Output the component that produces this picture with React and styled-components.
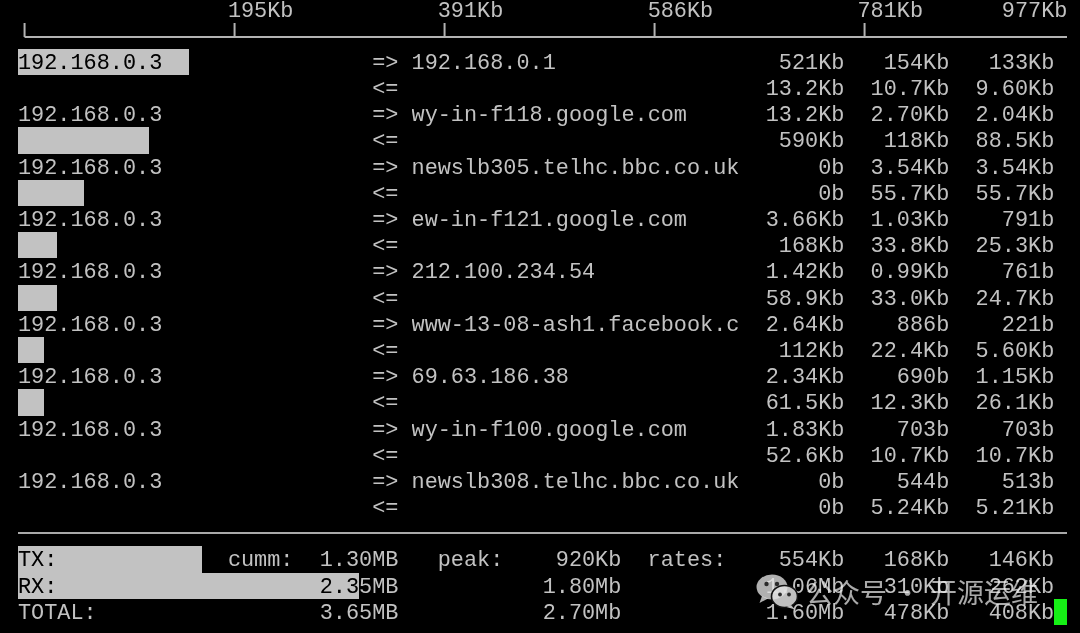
import React from 'react'
import styled, { createGlobalStyle } from 'styled-components'

// terminal cell metrics
const CW = 13.125
const LH = 26.2

const GlobalStyle = createGlobalStyle`
  html, body {
    margin: 0;
    padding: 0;
    background: #000;
    overflow: hidden;
  }
`

const Screen = styled.div`
  position: relative;
  width: 1080px;
  height: 633px;
  overflow: hidden;
  background: #000;
`

const Term = styled.div`
  margin-top: -3.5px;
  padding-left: 18px;
  font-family: 'Liberation Mono', 'Courier New', monospace;
  font-size: 21.875px;
  color: #c2c2c2;
  white-space: pre;
`

const Line = styled.div`
  position: relative;
  height: ${LH}px;
  line-height: 29px;
  display: grid;
  grid-template-columns: ${p => p.$cols};
`

const Cell = styled.span`
  overflow: hidden;
  text-align: ${p => (p.$right ? 'right' : 'left')};
`

const Bar = styled.span`
  position: absolute;
  left: 0;
  top: 0;
  height: 100%;
  background: #c2c2c2;
  mix-blend-mode: difference;
`

const Cursor = styled.span`
  height: 100%;
  background: #16f016;
`

const Rule = styled.div`
  height: ${LH}px;
  display: flex;
  align-items: center;

  &::after {
    content: '';
    width: 80ch;
    height: 2px;
    background: #a9a9a9;
  }
`

const Scale = styled.svg`
  display: block;
  stroke: #b3b3b3;
  stroke-width: 2;
`

const Watermark = styled.div`
  position: absolute;
  left: 756px;
  top: 572px;
  display: flex;
  align-items: center;
  gap: 8px;
  font-family: 'Noto Sans CJK SC', sans-serif;
  font-size: 27px;
  color: rgba(235, 235, 235, 0.72);
  white-space: pre;
`

const Dot = styled.span`
  margin: 0 9px 0 7px;
`

const HOST_COLS = '27ch 3ch 25ch 8ch 8ch 8ch'
const TOTAL_COLS = '16ch 5ch 8ch 3ch 5ch 9ch 2ch 6ch 9ch 8ch 8ch 1ch'

const labels = ['195Kb', '391Kb', '586Kb', '781Kb', '977Kb']
const ticks = [0, 16, 32, 48, 64]

const flows = [
  ['192.168.0.1', ['521Kb', '154Kb', '133Kb'], ['13.2Kb', '10.7Kb', '9.60Kb'], 13, 0],
  ['wy-in-f118.google.com', ['13.2Kb', '2.70Kb', '2.04Kb'], ['590Kb', '118Kb', '88.5Kb'], 0, 10],
  ['newslb305.telhc.bbc.co.uk', ['0b', '3.54Kb', '3.54Kb'], ['0b', '55.7Kb', '55.7Kb'], 0, 5],
  ['ew-in-f121.google.com', ['3.66Kb', '1.03Kb', '791b'], ['168Kb', '33.8Kb', '25.3Kb'], 0, 3],
  ['212.100.234.54', ['1.42Kb', '0.99Kb', '761b'], ['58.9Kb', '33.0Kb', '24.7Kb'], 0, 3],
  ['www-13-08-ash1.facebook.c', ['2.64Kb', '886b', '221b'], ['112Kb', '22.4Kb', '5.60Kb'], 0, 2],
  ['69.63.186.38', ['2.34Kb', '690b', '1.15Kb'], ['61.5Kb', '12.3Kb', '26.1Kb'], 0, 2],
  ['wy-in-f100.google.com', ['1.83Kb', '703b', '703b'], ['52.6Kb', '10.7Kb', '10.7Kb'], 0, 0],
  ['newslb308.telhc.bbc.co.uk', ['0b', '544b', '513b'], ['0b', '5.24Kb', '5.21Kb'], 0, 0],
]

const totals = [
  { label: 'TX:', k1: 'cumm:', v1: '1.30MB', k2: 'peak:', v2: '920Kb', k3: 'rates:', rates: ['554Kb', '168Kb', '146Kb'], bar: 14 },
  { label: 'RX:', k1: '', v1: '2.35MB', k2: '', v2: '1.80Mb', k3: '', rates: ['1.06Mb', '310Kb', '262Kb'], bar: 26 },
  { label: 'TOTAL:', k1: '', v1: '3.65MB', k2: '', v2: '2.70Mb', k3: '', rates: ['1.60Mb', '478Kb', '408Kb'], bar: 0, cursor: true },
]

const HostLine = ({ host, dir, peer, rates, bar }) => (
  <Line $cols={HOST_COLS}>
    <Cell>{host}</Cell>
    <Cell>{dir}</Cell>
    <Cell>{peer}</Cell>
    {rates.map((r, i) => (
      <Cell key={i} $right>{r}</Cell>
    ))}
    {bar > 0 && <Bar style={{ width: `${bar}ch` }} />}
  </Line>
)

const WeChatIcon = () => (
  <svg width="42" height="36" viewBox="0 0 42 36">
    <ellipse cx="16" cy="13" rx="15.5" ry="12.5" fill="rgba(225,225,225,0.78)" />
    <path d="M6 22 L3.5 29 L12 24.5 Z" fill="rgba(225,225,225,0.78)" />
    <circle cx="10.5" cy="10" r="2.2" fill="#2a2a2a" />
    <circle cx="21" cy="10" r="2.2" fill="#2a2a2a" />
    <ellipse cx="28.5" cy="22.5" rx="13" ry="11" fill="rgba(225,225,225,0.85)" stroke="#111" strokeWidth="1.6" />
    <path d="M35 31 L39 35.5 L30.5 33 Z" fill="rgba(225,225,225,0.85)" />
    <circle cx="24" cy="20.5" r="1.9" fill="#2a2a2a" />
    <circle cx="33" cy="20.5" r="1.9" fill="#2a2a2a" />
  </svg>
)

const App = () => (
  <Screen>
    <GlobalStyle />
    <Term>
      <Line $cols="16ch 16ch 16ch 16ch 11ch 5ch">
        <Cell />
        {labels.map(l => (
          <Cell key={l}>{l}</Cell>
        ))}
      </Line>
      <Line $cols="1fr">
        <Scale width={80 * CW} height={LH}>
          <line x1={CW / 2} y1="14" x2={80 * CW - 1} y2="14" />
          {ticks.map(c => (
            <line key={c} x1={(c + 0.5) * CW} y1="0" x2={(c + 0.5) * CW} y2="14" />
          ))}
        </Scale>
      </Line>

      {flows.map(([peer, tx, rx, txBar, rxBar]) => (
        <React.Fragment key={peer}>
          <HostLine host="192.168.0.3" dir="=>" peer={peer} rates={tx} bar={txBar} />
          <HostLine host="" dir="<=" peer="" rates={rx} bar={rxBar} />
        </React.Fragment>
      ))}

      <Rule />

      {totals.map(t => (
        <Line key={t.label} $cols={TOTAL_COLS}>
          <Cell>{t.label}</Cell>
          <Cell>{t.k1}</Cell>
          <Cell $right>{t.v1}</Cell>
          <Cell />
          <Cell>{t.k2}</Cell>
          <Cell $right>{t.v2}</Cell>
          <Cell />
          <Cell>{t.k3}</Cell>
          {t.rates.map((r, i) => (
            <Cell key={i} $right>{r}</Cell>
          ))}
          {t.cursor ? <Cursor /> : <Cell />}
          {t.bar > 0 && <Bar style={{ width: `${t.bar}ch` }} />}
        </Line>
      ))}
    </Term>

    <Watermark>
      <WeChatIcon />
      <span>
        公众号<Dot>·</Dot>开源运维
      </span>
    </Watermark>
  </Screen>
)

export default App
